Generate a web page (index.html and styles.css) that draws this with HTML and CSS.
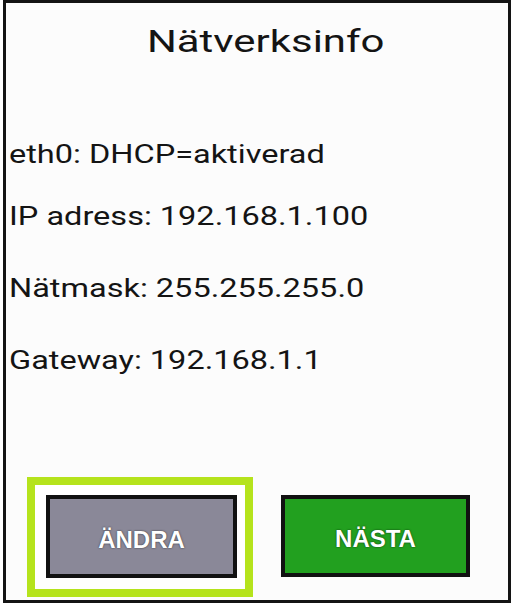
FILE: index.html
```html
<!DOCTYPE html>
<html lang="sv">

<head>
    <meta charset="UTF-8">
    <meta name="viewport" content="width=device-width, initial-scale=1.0">
    <title>Nätverksinfo</title>
    <link rel="stylesheet" href="styles.css">
</head>

<body>

    <div class="screen">
        <h1 class="title"><span>Nätverksinfo</span></h1>

        <div class="info">
            <p class="iface"><span>eth0: DHCP=aktiverad</span></p>
            <div class="fields">
                <p><span>IP adress: 192.168.1.100</span></p>
                <p><span>Nätmask: 255.255.255.0</span></p>
                <p><span>Gateway: 192.168.1.1</span></p>
            </div>
        </div>

        <div class="actions">
            <div class="focus">
                <button class="btn btn-edit">ÄNDRA</button>
            </div>
            <button class="btn btn-next">NÄSTA</button>
        </div>
    </div>

</body>

</html>
```

FILE: styles.css
```css
body {
    margin: 0;
    padding: 0;
    background-color: #ffffff;
    font-family: 'Roboto', 'Liberation Sans', sans-serif;
    color: #141414;
}

.screen {
    width: 502px;
    height: 597px;
    margin-left: 3px;
    border: 3px solid #141414;
    background-color: #fcfcfc;
    display: flex;
    flex-direction: column;
}

.title {
    margin: 20px 0 0 0;
    padding-left: 17px;
    font-size: 32px;
    font-weight: 400;
    line-height: 36px;
    text-align: center;
}

.title span {
    display: inline-block;
    transform: scaleX(1.31);
}

.info {
    margin-top: 80px;
    padding-left: 3px;
}

.info p {
    margin: 0;
    font-size: 26px;
    line-height: 30px;
}

.info span {
    display: inline-block;
    transform: scaleX(1.25);
    transform-origin: left center;
}

.fields {
    margin-top: 32px;
    display: flex;
    flex-direction: column;
    gap: 42px;
}

.actions {
    margin-top: auto;
    margin-bottom: 3px;
    padding-left: 21px;
    display: flex;
    align-items: flex-start;
    gap: 28px;
}

.focus {
    border: 8px solid #b5e31c;
    background-color: #ffffff;
    padding: 10px 8px 11px 11px;
}

.btn {
    display: block;
    margin: 0;
    padding: 6px 0 0 0;
    border: 4px solid #111111;
    font-family: 'Liberation Sans', Arial, sans-serif;
    font-size: 24px;
    font-weight: 700;
    color: #ffffff;
    text-shadow: 0 0 2px rgba(0, 0, 0, 0.7);
    cursor: pointer;
}

.btn-edit {
    width: 191px;
    height: 83px;
    background-color: #8a8898;
}

.btn-next {
    width: 189px;
    height: 82px;
    margin-top: 18px;
    background-color: #22a01f;
}
```
